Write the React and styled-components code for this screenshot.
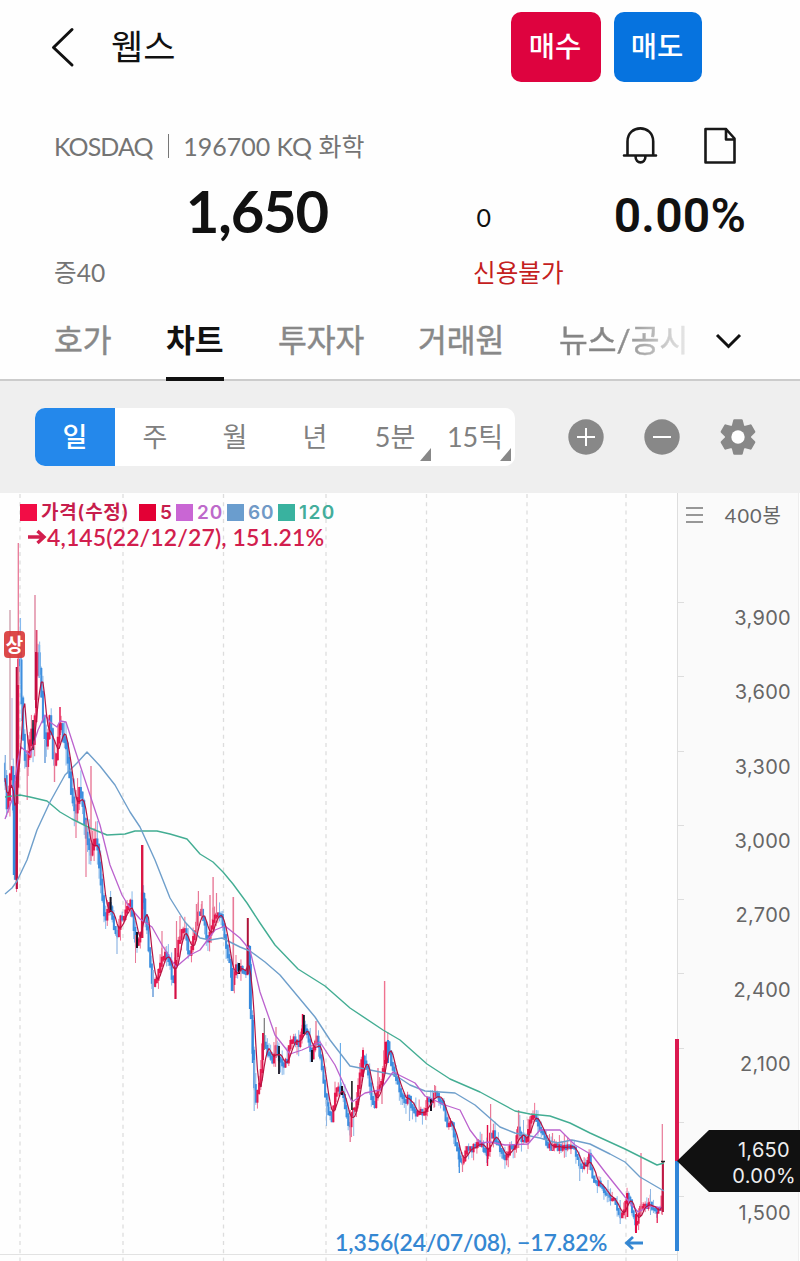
import React from 'react';
import styled, { createGlobalStyle } from 'styled-components';

const Global = createGlobalStyle`
  *, *::before, *::after { box-sizing: border-box; }
  body { margin: 0; background: #fefefe; color: #111; font-family: Lato, "Noto Sans CJK KR", sans-serif; }
`;

const Screen = styled.main`
  width: 800px;
  height: 1261px;
  overflow: hidden;
  display: flex;
  flex-direction: column;
  background: #fefefe;
`;

const TopBar = styled.header`
  height: 94px;
  display: flex;
  align-items: center;
  padding: 0 98px 0 50px;
`;

const Title = styled.h1`
  margin: -2px auto 0 35px;
  font-size: 35px;
  line-height: 48px;
  font-weight: 400;
`;

const TradeButton = styled.button`
  width: ${(p) => p.$width}px;
  height: 70px;
  margin-left: ${(p) => p.$gap || 0}px;
  padding: 0 2px 3px 0;
  border: 0;
  border-radius: 10px;
  background: ${(p) => p.$color};
  color: #fff;
  font: 500 28.5px/40px Lato, "Noto Sans CJK KR", sans-serif;
`;

const InfoRow = styled.section`
  height: 104px;
  padding: 0 63px 0 54px;
  display: flex;
  align-items: center;
`;

const Market = styled.div`
  margin-right: auto;
  display: flex;
  align-items: center;
  white-space: pre;
  font-size: 25px;
  line-height: 36px;
  color: #747474;
`;

const Exchange = styled.span`
  letter-spacing: -0.9px;
`;

const Divider = styled.i`
  width: 1.5px;
  height: 24px;
  margin: 0 14px 0 15px;
  background: #777;
`;

const PriceRow = styled.section`
  height: 46px;
  margin-top: -9px;
  margin-bottom: 1px;
  display: grid;
  grid-template-columns: 328px 163px 255px;
  align-items: center;
  justify-items: end;
`;

const Price = styled.strong`
  margin-top: -8px;
  font-size: 58px;
  line-height: 60px;
  font-weight: 700;
  letter-spacing: -1.2px;
`;

const Change = styled.span`
  margin-top: 4px;
  font-size: 25px;
`;

const Rate = styled.strong`
  margin-top: 2px;
  font: 600 48px/50px Roboto, sans-serif;
  letter-spacing: 0.2px;
`;

const StatusRow = styled.section`
  height: 72px;
  display: grid;
  grid-template-columns: 419px 1fr;
  align-items: center;
  padding: 0 54px 2px;
  font-size: 24.6px;
  color: #747474;
`;

const Warning = styled.span`
  color: #c4201d;
`;

const Tabs = styled.nav`
  height: 73px;
  border-bottom: 2px solid #ccc;
  padding-left: 54px;
  display: flex;
  align-items: stretch;
`;

const Tab = styled.a`
  position: relative;
  width: ${(p) => p.$width}px;
  margin-right: ${(p) => p.$gap}px;
  white-space: nowrap;
  font-size: 31.3px;
  line-height: 64px;
  font-weight: ${(p) => (p.$active ? 700 : 400)};
  color: ${(p) => (p.$active ? '#111' : '#888')};
  ${(p) => !p.$active && !p.$fade && '-webkit-text-stroke: 0.5px #888;'}
  ${(p) => p.$active && `&::after { content: ''; position: absolute; left: 0; right: 0; bottom: -2px; height: 4px; background: #111; }`}
  ${(p) => p.$fade && `background: linear-gradient(90deg, #858585 45%, #e8e8e8 100%); background-clip: text; color: transparent; -webkit-text-stroke: 0.5px transparent;`}
`;

const MoreIcon = styled.svg`
  margin-top: 23px;
`;

const Toolbar = styled.section`
  height: 112px;
  background: #efefef;
  padding: 0 43px 0 35px;
  display: flex;
  align-items: center;
  justify-content: space-between;
`;

const Periods = styled.div`
  width: 480px;
  height: 58px;
  display: grid;
  grid-template-columns: repeat(6, 1fr);
  border-radius: 10px;
  background: #fff;
  overflow: hidden;
`;

const Period = styled.button`
  position: relative;
  border: 0;
  padding: 0 0 1px;
  font: ${(p) => (p.$active ? 500 : 400)} 27px/40px Lato, "Noto Sans CJK KR", sans-serif;
  background: ${(p) => (p.$active ? '#2488eb' : 'transparent')};
  color: ${(p) => (p.$active ? '#fff' : '#808080')};
  ${(p) => p.$menu && `&::after { content: ''; position: absolute; right: 4px; bottom: 5px; border-left: 11px solid transparent; border-bottom: 13px solid #888; }`}
`;

const Tools = styled.div`
  display: flex;
  gap: 38px;
`;

const ChartArea = styled.section`
  flex: 1;
  display: flex;
`;

const Plot = styled.div`
  width: 677px;
  height: 768px;
  position: relative;
`;

const Drawing = styled.svg`
  display: block;
`;

const Legend = styled.div`
  position: absolute;
  top: 6px;
  left: 20px;
  height: 26px;
  display: flex;
  align-items: center;
`;

const Series = styled.span`
  width: ${(p) => p.$width}px;
  display: flex;
  align-items: center;
  white-space: nowrap;
  font: 600 19px/26px Inter, "Noto Sans CJK KR", sans-serif;
  letter-spacing: ${(p) => p.$track || 0.3}px;
  color: ${(p) => p.$ink};
  &::before { content: ''; width: 17px; height: 17px; margin-right: 4px; background: ${(p) => p.$fill}; }
`;

const SeriesName = styled.span`
  padding-top: 2px;
`;

const Extreme = styled.div`
  position: absolute;
  left: ${(p) => p.$left}px;
  top: ${(p) => p.$top}px;
  display: flex;
  align-items: center;
  font-size: 23px;
  line-height: 28px;
  font-weight: 600;
  letter-spacing: ${(p) => p.$track}px;
  white-space: nowrap;
  color: ${(p) => p.$color};
`;

const LimitBadge = styled.span`
  position: absolute;
  left: 4px;
  top: 138px;
  width: 21px;
  height: 27px;
  border-radius: 4px;
  background: rgba(216, 53, 53, .9);
  color: #fff;
  text-align: center;
  font: 700 19px/25px "Noto Sans CJK KR", sans-serif;
`;

const Axis = styled.aside`
  position: relative;
  width: 122px;
  height: 768px;
  background: #fafafa;
  border-left: 1px solid #dedede;
  border-right: 1px solid #eee;
  color: #666;
`;

const AxisHead = styled.div`
  height: 88px;
  padding: 9px 16px 0 8px;
  display: flex;
  align-items: flex-start;
  justify-content: space-between;
  font-size: 20px;
  line-height: 26px;
  letter-spacing: 1px;
`;

const AxisValue = styled.div`
  height: 74.3px;
  padding-right: 7px;
  display: flex;
  align-items: center;
  justify-content: flex-end;
  font: 400 20px/24px Inter, sans-serif;
  letter-spacing: .3px;
  &::before { content: ''; align-self: flex-start; width: 6px; height: 1px; margin: 21px auto 0 0; background: #ddd; }
`;

const CurrentTag = styled.div`
  position: absolute;
  left: -1px;
  top: 637px;
  width: 123px;
  height: 62px;
  padding: 7px 4px 0 0;
  background: #111;
  clip-path: polygon(0 50%, 32px 0, 100% 0, 100% 100%, 32px 100%);
  color: #eee;
  text-align: right;
  font: 400 20px/26px Inter, sans-serif;
  letter-spacing: .3px;
`;

const TagPrice = styled.div`
  padding-right: 6px;
`;

const RangeBar = styled.div`
  position: absolute;
  left: -3px;
  top: 546px;
  width: 4px;
  height: 212px;
  background: linear-gradient(#db1950 0 122px, #3186d8 122px);
`;

/* Price path in drawing coordinates: x, y of the close. */
const PATH = [5,780,7,808,9,790,11,765,13,785,14,870,16,885,17,700,19,640,21,690,23,735,25,760,27,765,29,748,31,730,33,740,35,715,37,650,39,665,41,690,44,735,47,745,50,715,53,755,55,765,58,740,60,720,62,735,66,745,69,770,72,800,76,812,79,790,82,800,85,830,88,845,91,850,95,838,98,850,100,875,103,905,105,925,108,905,110,905,113,925,117,935,120,920,124,918,128,905,130,900,133,922,136,945,140,940,142,895,144,905,147,930,149,955,152,985,156,980,160,965,164,955,167,955,170,965,173,985,175,965,178,945,182,930,185,930,188,950,191,952,194,935,198,915,201,910,204,920,207,943,210,930,214,918,218,912,221,915,223,925,226,945,230,965,232,988,236,965,239,970,243,970,246,975,248,940,250,985,251,1020,253,1065,255,1102,257,1095,260,1078,263,1040,267,1050,272,1063,276,1045,279,1060,283,1065,287,1060,290,1040,295,1040,299,1045,303,1023,307,1035,312,1057,316,1037,319,1045,322,1070,325,1095,329,1115,332,1118,335,1095,338,1087,342,1092,346,1110,349,1132,352,1112,355,1110,358,1090,361,1065,363,1057,367,1068,371,1095,374,1110,377,1088,381,1085,383,1070,385,1046,388,1045,391,1063,394,1075,398,1085,402,1098,405,1103,408,1095,411,1107,415,1112,420,1111,425,1112,427,1100,431,1102,435,1093,439,1100,443,1105,447,1125,451,1120,455,1140,459,1158,462,1163,466,1148,470,1148,476,1147,480,1143,485,1150,488,1155,490,1136,493,1133,497,1142,501,1152,506,1157,510,1148,515,1148,518,1130,521,1138,526,1140,530,1120,534,1112,538,1125,542,1130,546,1145,552,1147,558,1148,565,1148,572,1145,577,1155,580,1170,585,1165,589,1155,592,1178,597,1182,602,1187,608,1195,614,1200,620,1215,623,1215,627,1195,630,1200,633,1215,636,1228,640,1210,645,1205,651,1205,657,1213,660,1208,662,1195];

const GREEN = '5,797 20,795 30,797 47,801 60,812 72,819 90,828 107,835 125,834 135,831 157,831 170,834 187,839 200,854 213,862 223,872 233,884 247,903 260,923 275,945 298,969 325,986 350,1008 383,1030 400,1040 427,1064 450,1079 480,1092 515,1111 530,1114 550,1116 570,1123 590,1133 625,1149 645,1159 657,1165 664,1163';
const BLUE = '5,894 12,888 17,881 27,860 37,830 50,802 65,775 77,763 87,752 100,766 115,785 130,812 140,827 155,860 170,898 185,922 200,938 210,940 222,938 240,947 250,951 265,962 280,975 295,993 315,1017 330,1040 350,1066 370,1070 395,1075 410,1085 425,1091 455,1093 475,1105 500,1127 515,1133 540,1138 557,1143 572,1140 590,1144 610,1154 625,1162 640,1177 664,1191';
const PURPLE = '5,819 12,800 18,760 21,747 30,755 38,730 45,715 50,722 57,727 60,721 66,722 75,750 90,795 100,825 110,865 122,895 128,905 140,919 152,927 162,945 176,967 190,955 200,950 215,930 225,926 240,938 250,950 260,992 275,1035 290,1054 302,1050 320,1042 335,1065 352,1102 365,1093 380,1090 393,1072 405,1078 415,1083 425,1096 445,1105 460,1110 470,1130 480,1143 490,1142 505,1145 528,1144 540,1130 560,1130 575,1145 592,1155 605,1172 625,1197 638,1212 650,1206 662,1208';

const RED = '#e30b45';
const SKY = '#3388dd';
const INK = '#171323';
const PINK = '#e87997';
const PALE = '#8fb6e3';

/* Notable bars: x, top, bottom, width, colour. */
const BARS = [
  [10, 610, 770, 1, '#bd7c8f'], [12, 698, 760, 1, '#b9b1df'], [14, 775, 875, 2.4, SKY],
  [16.8, 667, 889, 2.2, '#bd0c3e'], [18.3, 543, 685, 1.3, PINK], [20.4, 618, 684, 1.3, '#86b9ee'],
  [35, 595, 700, 1.3, '#dc7c98'], [36.6, 630, 700, 1.8, '#dc4970'], [36, 652, 708, 2, '#c50d42'], [39.3, 645, 678, 1.8, '#83bdf1'],
  [5.3, 755, 790, 1.4, PALE], [27.2, 750, 800, 1.2, PINK], [45, 740, 763, 2, PALE], [54.5, 740, 782, 1.4, PINK],
  [60, 707, 735, 1.4, RED], [76, 790, 838, 1.2, PINK], [86, 820, 877, 1.2, PINK], [91, 766, 861, 1.4, PINK],
  [33, 720, 750, 1.5, INK], [110.6, 897, 912, 2, INK], [137, 932, 948, 2, INK], [135.5, 935, 963, 1, PINK], [142.2, 845, 938, 2.4, '#da1745'],
  [144.4, 893, 922, 1.8, SKY], [162, 931, 957, 1.2, PINK], [153, 970, 997, 2, PALE], [117, 930, 954, 1.2, PALE],
  [175.5, 948, 999, 2.2, '#d51045'], [176.5, 921, 960, 1.2, PINK], [180, 916, 940, 1.2, PINK], [196.5, 904, 940, 1.4, PINK], [198.4, 891, 930, 1.2, PINK],
  [202, 901, 920, 1.4, PINK], [210, 895, 932, 1.4, PINK], [213.1, 877, 920, 1.4, PINK], [216.5, 893, 915, 1.2, PINK],
  [233.3, 897, 991, 1.6, PINK], [232, 968, 991, 2.5, SKY], [239, 963, 974, 2.2, INK], [247.8, 918, 974, 2, '#ae1239'], [250, 946, 1009, 2.2, SKY],
  [252.8, 1020, 1063, 2, SKY], [254.2, 1060, 1111, 1.2, PALE], [264.3, 1018, 1050, 1.2, '#777'], [263, 1033, 1060, 2, '#d71849'],
  [276, 1027, 1058, 1.3, PINK], [279, 1046, 1074, 1.8, INK], [303.8, 1015, 1034, 2.1, INK], [302.4, 1014, 1033, 1.2, RED], [312, 1050, 1062, 2, INK], [316, 1021, 1047, 1.4, PINK],
  [340.4, 1043, 1093, 1.1, '#62a9e8'], [342, 1086, 1095, 2.2, INK], [351.9, 1081, 1110, 1.8, '#333'], [350.2, 1110, 1142, 1.4, PINK], [353.7, 1110, 1136, 1, PALE],
  [326.5, 1100, 1126, 1.1, PALE], [363, 1050, 1077, 2, RED], [378, 1068, 1090, 1.4, PINK], [382, 1085, 1104, 1.3, PINK],
  [384.6, 981, 1060, 1.4, '#ef7390'], [385.8, 1042, 1064, 2.4, RED], [388, 1040, 1063, 2.1, SKY], [409.5, 1100, 1121, 1.2, PALE], [431, 1099, 1111, 2, INK], [434.6, 1085, 1107, 1.2, PINK],
  [459.3, 1145, 1173, 1.2, SKY], [462.5, 1155, 1172, 1.2, PINK], [487.5, 1125, 1166, 1.4, RED], [490.6, 1104, 1145, 1.2, PINK], [518.6, 1110, 1148, 1.4, PINK],
  [523.5, 1120, 1140, 1, PALE], [552.5, 1133, 1150, 1.2, PINK], [579.7, 1155, 1181, 1.2, PALE], [608, 1180, 1198, 1, PALE], [620.2, 1200, 1224, 1.2, PALE],
  [627.4, 1193, 1217, 1.8, RED], [641, 1153, 1215, 1.4, PINK], [650.5, 1189, 1215, 1, PALE], [636, 1214, 1233, 2, RED], [657.2, 1212, 1223, 1.2, RED],
  [662.3, 1124, 1215, 1.2, PINK], [663, 1162, 1212, 1.8, '#ba0e3a'],
];

function closeAt(x) {
  for (let i = 2; i < PATH.length; i += 2) {
    if (x <= PATH[i]) {
      const t = (x - PATH[i - 2]) / (PATH[i] - PATH[i - 2]);
      return PATH[i - 1] + t * (PATH[i + 1] - PATH[i - 1]);
    }
  }
  return PATH[PATH.length - 1];
}

const STEP = 1.65;
const COUNT = 399;
const noise = (i) => {
  const v = Math.sin(i * 127.1 + 31.7) * 43758.5453;
  return v - Math.floor(v);
};
const closes = Array.from({ length: COUNT }, (_, i) => closeAt(5 + i * STEP) + (noise(i) - 0.5) * 5);
const candles = closes.map((close, i) => {
  const open = i ? closes[i - 1] : close - 12;
  const scale = i < 60 ? 1.5 : i > 340 ? 0.6 : 0.9;
  const top = Math.min(open, close) - 2 * scale;
  const bottom = Math.max(open, close) + 2.5 * scale;
  return {
    x: 5 + i * STEP,
    top,
    bottom,
    high: top - noise(i + 500) ** 2 * 13 * scale,
    low: bottom + noise(i + 900) ** 2 * 12 * scale,
    up: close < open,
  };
});
const fast = closes
  .map((_, i) => {
    const part = closes.slice(Math.max(0, i - 4), i + 1);
    return `${(5 + i * STEP).toFixed(1)},${(part.reduce((a, b) => a + b, 0) / part.length).toFixed(1)}`;
  })
  .join(' ');

function PriceChart() {
  return (
    <Drawing width="677" height="768" viewBox="0 493 677 768" fill="none">
      {[20, 123, 223.5, 326, 426.5, 527, 626].map((x) => (
        <path key={x} d={`M${x} 494V1261`} stroke="#dddddd" strokeWidth="1.3" strokeDasharray="4 4.3" />
      ))}
      <path d="M0 1254.5H677" stroke="#e2e2e2" />
      {candles.map((c, i) => (
        <g key={i} stroke={c.up ? RED : SKY}>
          <path d={`M${c.x} ${c.high}V${c.low}`} strokeWidth=".9" opacity=".65" />
          <path d={`M${c.x} ${c.top}V${c.bottom}`} strokeWidth="2.1" opacity=".9" />
        </g>
      ))}
      {BARS.map(([x, top, bottom, width, color]) => (
        <path key={`${x}-${top}`} d={`M${x} ${top}V${bottom}`} stroke={color} strokeWidth={width} />
      ))}
      <polyline points={GREEN} stroke="#43ad93" strokeWidth="1.4" strokeLinejoin="round" />
      <polyline points={BLUE} stroke="#6f9fcb" strokeWidth="1.4" strokeLinejoin="round" />
      <polyline points={PURPLE} stroke="#bb62ce" strokeWidth="1.3" strokeLinejoin="round" />
      <polyline points={fast} stroke="#b51442" strokeWidth="1.2" strokeLinejoin="round" />
      <path d="M661 1161.5H665" stroke="#222" strokeWidth="1.5" />
    </Drawing>
  );
}

const PERIODS = [
  { label: '일', active: true },
  { label: '주' },
  { label: '월' },
  { label: '년' },
  { label: '5분', menu: true },
  { label: '15틱', menu: true },
];
const SERIES = [
  { name: '가격(수정)', width: 119, ink: '#c71d4c', fill: '#f20d46', track: 0.7 },
  { name: '5', width: 37, ink: '#c71d4c', fill: '#e30035', track: 0.3 },
  { name: '20', width: 51, ink: '#bd69ca', fill: '#c966d4', track: 0.8 },
  { name: '60', width: 51, ink: '#7099c6', fill: '#6a9dce', track: 0.8 },
  { name: '120', width: 60, ink: '#43ad9b', fill: '#39b29f', track: 1.4 },
];
const LEVELS = ['3,900', '3,600', '3,300', '3,000', '2,700', '2,400', '2,100', '', '1,500'];

export default function App() {
  return (
    <Screen>
      <Global />
      <TopBar>
        <svg width="26" height="42" viewBox="0 0 26 42" fill="none" stroke="#111" strokeWidth="3" strokeLinecap="round" strokeLinejoin="round">
          <path d="M22 3.5 3.5 21.5 22 39" />
        </svg>
        <Title>웹스</Title>
        <TradeButton $width={90} $color="#de033f">매수</TradeButton>
        <TradeButton $width={88} $gap={13} $color="#0673df">매도</TradeButton>
      </TopBar>
      <InfoRow>
        <Market><Exchange>KOSDAQ</Exchange><Divider />196700 KQ 화학</Market>
        <svg width="116" height="40" viewBox="621 126 116 40" fill="none" stroke="#181818" strokeWidth="2.6" strokeLinecap="round" strokeLinejoin="round">
          <path d="M624 155.5H656M627.5 155V141.5C627.5 124 653.2 124 653.2 141.5V155M635.5 156C635.5 164.5 645.5 164.5 645.5 156" />
          <path d="M705.5 129H726L734.5 138.5V162.5H705.5ZM726 129V139.5H734.5" />
        </svg>
      </InfoRow>
      <PriceRow>
        <Price>1,650</Price>
        <Change>0</Change>
        <Rate>0.00%</Rate>
      </PriceRow>
      <StatusRow>
        <span>증40</span>
        <Warning>신용불가</Warning>
      </StatusRow>
      <Tabs>
        <Tab $width={58} $gap={54}>호가</Tab>
        <Tab $width={58} $gap={54} $active>차트</Tab>
        <Tab $width={87} $gap={53}>투자자</Tab>
        <Tab $width={87} $gap={54}>거래원</Tab>
        <Tab $width={128} $gap={27} $fade>뉴스/공시</Tab>
        <MoreIcon width="30" height="20" viewBox="0 0 30 20" fill="none" stroke="#111" strokeWidth="3">
          <path d="M3 4 14.5 15.5 26 4" />
        </MoreIcon>
      </Tabs>
      <Toolbar>
        <Periods>
          {PERIODS.map((p) => (
            <Period key={p.label} $active={p.active} $menu={p.menu}>{p.label}</Period>
          ))}
        </Periods>
        <Tools>
          <svg width="38" height="38" viewBox="-19 -19 38 38"><circle r="17.7" fill="#888" /><path d="M-9 0H9M0-9V9" stroke="#fff" strokeWidth="2" /></svg>
          <svg width="38" height="38" viewBox="-19 -19 38 38"><circle r="17.7" fill="#888" /><path d="M-9 0H9" stroke="#fff" strokeWidth="2" /></svg>
          <svg width="38" height="38" viewBox="-19 -19 38 38">
            <circle r="13" fill="#888" />
            {[0, 60, 120, 180, 240, 300].map((a) => (
              <path key={a} transform={`rotate(${a})`} d="M-6.5-10-4.8-16.8Q-4.6-17.8-3.6-17.8H3.6Q4.6-17.8 4.8-16.8L6.5-10Z" fill="#888" />
            ))}
            <circle r="6.7" fill="#fff" />
          </svg>
        </Tools>
      </Toolbar>
      <ChartArea>
        <Plot>
          <PriceChart />
          <Legend>
            {SERIES.map((s) => (
              <Series key={s.name} $width={s.width} $ink={s.ink} $fill={s.fill} $track={s.track}>
                <SeriesName>{s.name}</SeriesName>
              </Series>
            ))}
          </Legend>
          <Extreme $left={27} $top={30} $track={0.13} $color="#d21e4e">
            <svg width="20" height="16" viewBox="0 0 20 16" fill="none" stroke="currentColor" strokeWidth="3.4"><path d="M1 8H17M10.5 2 17 8 10.5 14" /></svg>
            4,145(22/12/27), 151.21%
          </Extreme>
          <LimitBadge>상</LimitBadge>
          <Extreme $left={335} $top={735} $track={-0.08} $color="#3587d2">
            1,356(24/07/08), −17.82%
            <svg width="37" height="18" viewBox="0 0 37 18" fill="none" stroke="currentColor" strokeWidth="2.8"><path d="M36 10H20M26 4 19.5 10 26 16" /></svg>
          </Extreme>
        </Plot>
        <Axis>
          <AxisHead>
            <svg width="17" height="26" viewBox="0 0 17 26" stroke="#777" strokeWidth="1.7"><path d="M0 6H17M0 13H17M0 20H17" /></svg>
            <span>400봉</span>
          </AxisHead>
          {LEVELS.map((v, i) => (
            <AxisValue key={i}>{v}</AxisValue>
          ))}
          <RangeBar />
          <CurrentTag>
            <TagPrice>1,650</TagPrice>
            <div>0.00%</div>
          </CurrentTag>
        </Axis>
      </ChartArea>
    </Screen>
  );
}
